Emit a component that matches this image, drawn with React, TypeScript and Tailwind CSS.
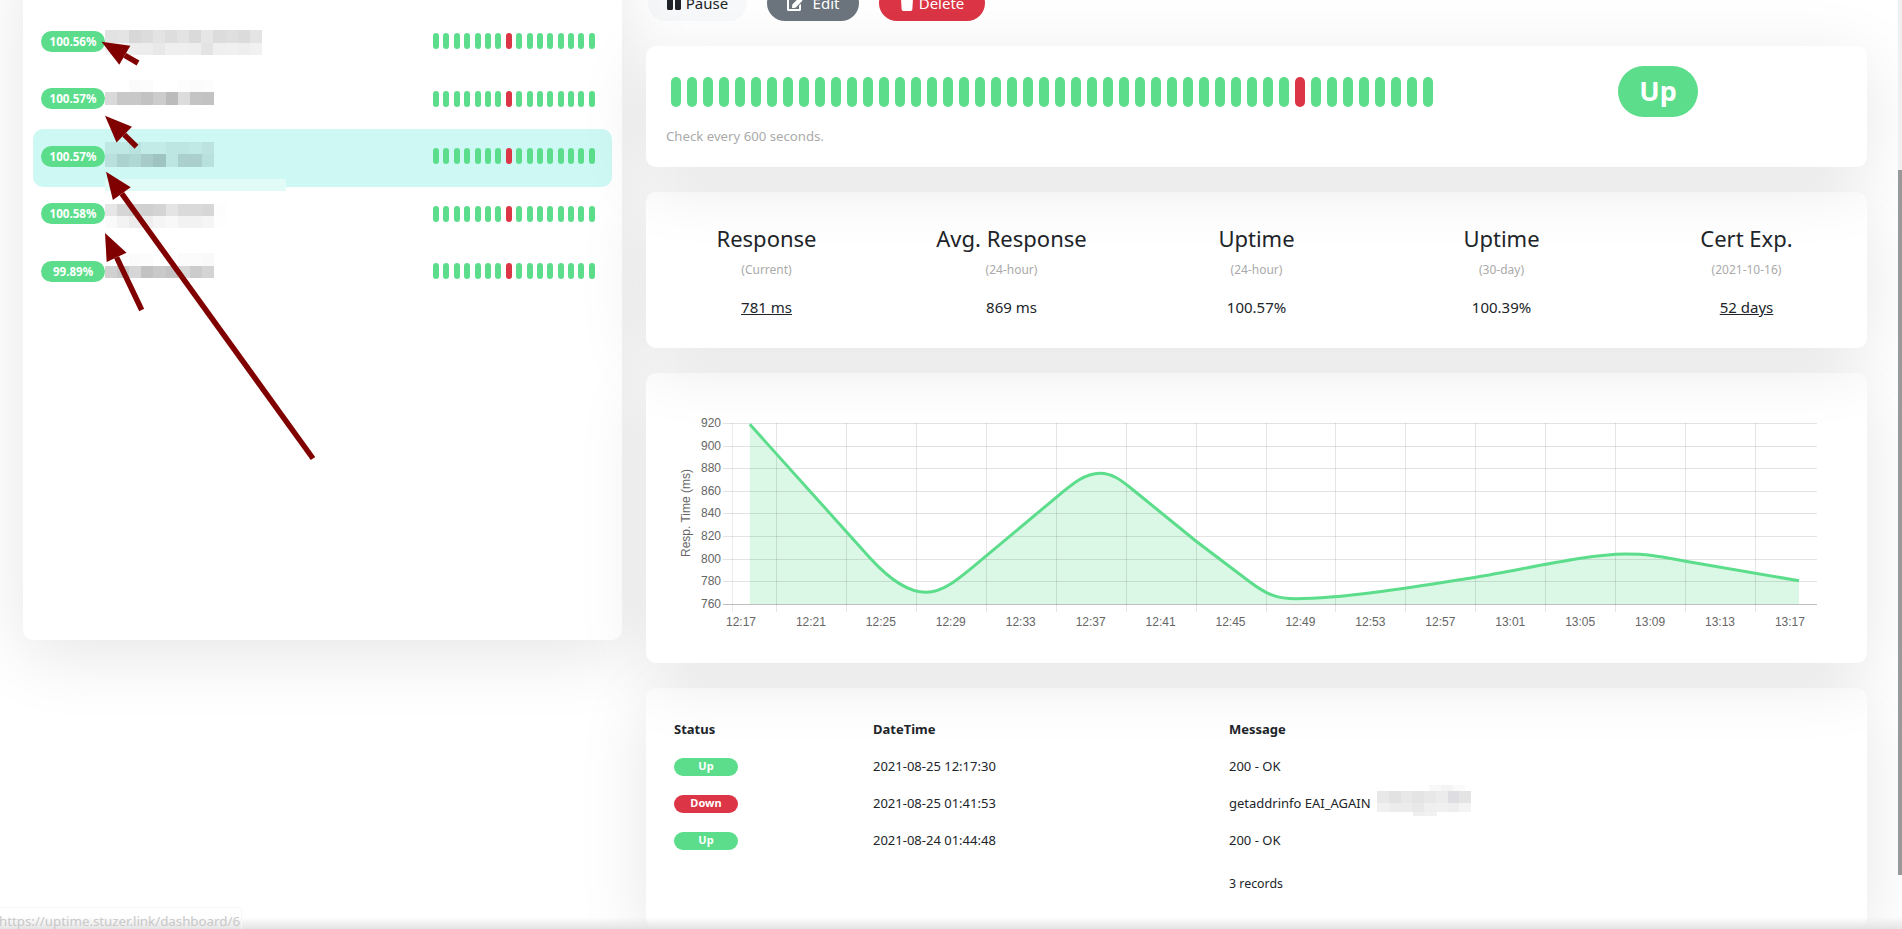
import { FaPause, FaEdit, FaTrash } from "react-icons/fa";

const monitors = [
  { uptime: "100.56%", active: false },
  { uptime: "100.57%", active: false },
  { uptime: "100.57%", active: true },
  { uptime: "100.58%", active: false },
  { uptime: "99.89%", active: false },
];

const stats = [
  { title: "Response", sub: "(Current)", value: "781 ms", link: true },
  { title: "Avg. Response", sub: "(24-hour)", value: "869 ms", link: false },
  { title: "Uptime", sub: "(24-hour)", value: "100.57%", link: false },
  { title: "Uptime", sub: "(30-day)", value: "100.39%", link: false },
  { title: "Cert Exp.", sub: "(2021-10-16)", value: "52 days", link: true },
];

const events = [
  { status: "Up", time: "2021-08-25 12:17:30", message: "200 - OK" },
  { status: "Down", time: "2021-08-25 01:41:53", message: "getaddrinfo EAI_AGAIN" },
  { status: "Up", time: "2021-08-24 01:44:48", message: "200 - OK" },
];

// censored blocks: [x, y, cell width, cell height, colours]
const mosaics: [number, number, number, number, string[]][] = [
  [105, 30, 12.05, 13, ["#e2e2e2", "#e4e4e4", "#d8d8d8", "#dcdcdc", "#e3e3e3", "#dddddd", "#e3e3e3", "#dadada", "#e6e6e6", "#dcdcdc", "#dfdfdf", "#dbdbdb", "#e4e4e4"]],
  [105, 43, 12.05, 12, ["#f3f3f3", "#f3f3f3", "#ededed", "#ededed", "#e8e8e8", "#efefef", "#efefef", "#eeeeee", "#e3e3e3", "#efefef", "#f0f0f0", "#eeeeee", "#f1f1f1"]],
  [105, 80, 12.1, 12, ["#ffffff", "#ffffff", "#fbfbfb", "#fcfcfc", "#ffffff", "#ffffff", "#fdfdfd", "#fbfbfb", "#fcfcfc"]],
  [105, 92, 12.1, 13, ["#d9d9d9", "#c8c8c8", "#c8c8c8", "#c2c2c2", "#cccccc", "#bbbbbb", "#dcdcdc", "#c4c4c4", "#c2c2c2"]],
  [105, 142, 12.1, 12, ["#bfe8e4", "#bfe8e4", "#b8e2de", "#c2eae6", "#c2eae6", "#bde5e1", "#bde5e1", "#c0e8e4", "#bce3df"]],
  [105, 154, 12.1, 13, ["#b9e0dc", "#abd2cf", "#afd7d3", "#a6cbc9", "#9ec3c1", "#bde5e1", "#aacfcd", "#aacfcd", "#b8e0dc"]],
  [105, 179, 181, 12, ["#e1fbf7"]],
  [105, 204, 12.1, 12, ["#e6e6e6", "#d6d6d6", "#d2d2d2", "#d0d0d0", "#d4d4d4", "#e4e4e4", "#dadada", "#dadada", "#d7d7d7", "#fdfdfd"]],
  [105, 216, 12.1, 12, ["#fafafa", "#f3f3f3", "#ececec", "#eeeeee", "#f5f5f5", "#f8f8f8", "#f2f2f2", "#f2f2f2", "#f5f5f5", "#fefefe"]],
  [105, 253, 12.1, 13, ["#ffffff", "#fefefe", "#fbfbfb", "#fcfcfc", "#ffffff", "#ffffff", "#fbfbfb", "#fbfbfb", "#f9f9f9"]],
  [105, 266, 12.1, 12, ["#d0d0d0", "#c8c8c8", "#d6d6d6", "#c2c2c2", "#c9c9c9", "#c4c4c4", "#d8d8d8", "#cccccc", "#d4d4d4"]],
  [1429, 785, 12, 6, ["#f8f8f8", "#f4f4f4", "#fafafa"]],
  [1377, 791, 11.75, 12, ["#e8e8e8", "#e2e2e2", "#e8e8e8", "#e4e4e4", "#e8e8e8", "#ececec", "#dddde2", "#e4e4e4"]],
  [1377, 803, 11.75, 9, ["#f0f0f0", "#ececec", "#ececec", "#e8e8e8", "#efefef", "#f0f0f0", "#eeeeee", "#f4f4f4"]],
  [1413, 812, 12, 4, ["#efefef", "#f2f2f2"]],
];

const arrows = [
  { tip: [101.5, 41.7], tail: [138, 63] },
  { tip: [105, 115.7], tail: [136.5, 146.7] },
  { tip: [106, 171.7], tail: [313, 458.5] },
  { tip: [105, 233], tail: [141.7, 310] },
];

const linePath =
  "M749.8 424.3 L870 558 C893 583 910 592.3 926 592.3 C945 592.3 962 576 986.5 555.7 L1056.3 497.3 " +
  "C1073 483.3 1085 473.3 1100 473.3 C1112 473.3 1121 480 1132 489 L1195.5 540.7 L1250 582 " +
  "C1268 595.5 1278 598.7 1296 598.7 C1345 598.5 1420 586 1475.6 577.3 C1530 568 1590 554 1625 554 " +
  "C1650 554 1660 556.5 1685.5 561.3 L1799 580.7";

function Bars({ count, red, className }: { count: number; red: number; className: string }) {
  return (
    <>
      {Array.from({ length: count }).map((_, i) => (
        <div
          key={i}
          className={`${className} rounded-full ${i === red ? "bg-[#dc3545]" : "bg-[#5cdd8b]"}`}
        />
      ))}
    </>
  );
}

function Chart() {
  const yLabels = [920, 900, 880, 860, 840, 820, 800, 780, 760];
  const xLabels = ["12:17", "12:21", "12:25", "12:29", "12:33", "12:37", "12:41", "12:45", "12:49", "12:53", "12:57", "13:01", "13:05", "13:09", "13:13", "13:17"];
  return (
    <svg viewBox="646 373 1221 290" className="block h-[290px] w-[1221px]">
      <path d={`${linePath} L1799 604 L749.8 604 Z`} fill="#5cdd8b" fillOpacity="0.22" />
      {yLabels.map((label, i) => {
        const y = Math.round(423 + i * 22.6) + 0.5;
        return (
          <g key={label}>
            <line x1={723} x2={1817} y1={y} y2={y} stroke="#000" strokeOpacity={i === 8 ? 0.25 : 0.11} />
            <text x={721} y={y + 3} textAnchor="end" fontSize="12" fontFamily="Liberation Sans" fill="#666">
              {label}
            </text>
          </g>
        );
      })}
      <line x1={732.5} x2={732.5} y1={423} y2={612} stroke="#000" strokeOpacity="0.08" />
      {xLabels.map((label, i) => {
        const x = Math.round(776 + i * 69.93) + 0.5;
        return i < 15 ? (
          <line key={label} x1={x} x2={x} y1={423} y2={612} stroke="#000" strokeOpacity="0.1" />
        ) : null;
      })}
      {xLabels.map((label, i) => (
        <text key={label} x={741 + i * 69.93} y={626} textAnchor="middle" fontSize="12" fontFamily="Liberation Sans" fill="#666">
          {label}
        </text>
      ))}
      <text
        x={0}
        y={0}
        transform="translate(689.5 513) rotate(-90)"
        textAnchor="middle"
        fontSize="12"
        fontFamily="Liberation Sans"
        fill="#666"
      >
        Resp. Time (ms)
      </text>
      <path d={linePath} fill="none" stroke="#5cdd8b" strokeWidth="3" />
    </svg>
  );
}

// mosaics and arrows were drawn on top of the screenshot
function Annotations() {
  return (
    <svg viewBox="0 0 1902 929" className="pointer-events-none absolute top-0 left-0 z-40 h-[929px] w-[1902px]">
      {mosaics.map(([x, y, w, h, cells], i) => (
        <g key={i} shapeRendering="crispEdges">
          {cells.map((fill, j) => (
            <rect key={j} x={x + j * w} y={y} width={w} height={h} fill={fill} />
          ))}
        </g>
      ))}
      {arrows.map(({ tip, tail }, i) => {
        const len = Math.hypot(tail[0] - tip[0], tail[1] - tip[1]);
        const ux = (tail[0] - tip[0]) / len;
        const uy = (tail[1] - tip[1]) / len;
        const bx = tip[0] + ux * 27;
        const by = tip[1] + uy * 27;
        const head = [
          tip,
          [bx - uy * 11, by + ux * 11],
          [bx + uy * 11, by - ux * 11],
        ];
        return (
          <g key={i} fill="#800000" stroke="#800000">
            <line x1={bx} y1={by} x2={tail[0]} y2={tail[1]} strokeWidth="5.5" />
            <polygon points={head.map((p) => p.join(",")).join(" ")} stroke="none" />
          </g>
        );
      })}
    </svg>
  );
}

export default function App() {
  return (
    <div className="relative h-[929px] w-[1902px] overflow-hidden bg-white font-['Noto_Sans',sans-serif] text-[#212529]">
      <div className="flex items-start pl-[23px]">
        <div className="relative z-0 -mt-[50px] h-[690px] w-[599px] rounded-[10px] bg-white px-[10px] pt-[64px] shadow-[0_15px_70px_rgba(0,0,0,0.1)]">
          {monitors.map((m, i) => (
            <div
              key={i}
              className={`flex h-[57.5px] items-center rounded-[10px] pr-[17px] pb-[3px] pl-[8px] ${m.active ? "bg-[#cdf8f4]" : ""}`}
            >
              <span className="flex h-[21px] w-[64px] items-center justify-center rounded-full bg-[#5cdd8b] text-[11.6px] font-bold text-white">
                {m.uptime}
              </span>
              <div className="ml-auto flex h-[16px] w-[162px] gap-[4.4px]">
                <Bars count={16} red={7} className="h-[16px] w-[6px]" />
              </div>
            </div>
          ))}
        </div>

        <div className="-mt-[15px] ml-[24px] flex w-[1221px] flex-col">
          <div className="flex h-[36px] items-center text-[15px]">
            <button className="ml-[2px] flex h-[36px] w-[99px] items-center justify-center gap-[5px] rounded-full bg-[#f8f9fa] text-[#212529]">
              <FaPause className="h-[16px] w-[14px]" />
              Pause
            </button>
            <button className="ml-[20px] flex h-[36px] w-[92px] items-center justify-center gap-[8px] rounded-full bg-[#6c757d] text-white">
              <FaEdit className="h-[18px] w-[18px]" />
              Edit
            </button>
            <button className="ml-[20px] flex h-[36px] w-[106px] items-center justify-center gap-[5px] rounded-full bg-[#dc3545] text-white">
              <FaTrash className="h-[16px] w-[14px]" />
              Delete
            </button>
          </div>

          <div className="relative z-30 mt-[25px] h-[121px] rounded-[10px] bg-white pt-[31px] pl-[25px] shadow-[0_15px_70px_rgba(0,0,0,0.1)]">
            <div className="flex items-start">
              <div className="flex gap-[6px]">
                <Bars count={48} red={39} className="h-[30px] w-[10px]" />
              </div>
              <span className="-mt-[11px] ml-[185px] flex h-[51px] w-[80px] items-center justify-center rounded-[26px] bg-[#5cdd8b] text-[27px] font-bold text-white">
                Up
              </span>
            </div>
            <p className="mt-[10px] -ml-[5px] text-[13.2px] text-[#aaa]">Check every 600 seconds.</p>
          </div>

          <div className="relative z-20 mt-[25px] h-[156px] rounded-[10px] bg-white pt-[30px] shadow-[0_15px_70px_rgba(0,0,0,0.1)]">
            <div className="-mx-[2px] grid grid-cols-5">
              {stats.map((s, i) => (
                <div key={i} className="flex flex-col items-center">
                  <h4 className="h-[32px] text-[22px] leading-[32px] font-normal">{s.title}</h4>
                  <p className="mt-[6px] h-[20px] text-[12px] leading-[20px] text-[#aaa]">{s.sub}</p>
                  <span className={`mt-[15px] h-[24px] text-[15px] leading-[24px] ${s.link ? "underline" : ""}`}>
                    {s.value}
                  </span>
                </div>
              ))}
            </div>
          </div>

          <div className="relative z-10 mt-[25px] h-[290px] rounded-[10px] bg-white shadow-[0_15px_70px_rgba(0,0,0,0.1)]">
            <Chart />
          </div>

          <div className="relative z-0 mt-[25px] h-[240px] rounded-[10px] bg-white pt-[23px] pl-[28px] text-[13px] shadow-[0_15px_70px_rgba(0,0,0,0.1)]">
            <div className="grid h-[37px] grid-cols-[199px_356px_1fr] items-center font-bold">
              <span>Status</span>
              <span>DateTime</span>
              <span>Message</span>
            </div>
            {events.map((e, i) => (
              <div key={i} className="grid h-[37px] grid-cols-[199px_356px_1fr] items-center">
                <span
                  className={`flex h-[18px] w-[64px] items-center justify-center rounded-full text-[11px] font-bold text-white ${e.status === "Up" ? "bg-[#5cdd8b]" : "bg-[#dc3545]"}`}
                >
                  {e.status}
                </span>
                <span>{e.time}</span>
                <span>{e.message}</span>
              </div>
            ))}
            <div className="mt-[6.5px] grid h-[37px] grid-cols-[199px_356px_1fr] items-center">
              <span />
              <span />
              <span className="text-[12.4px]">3 records</span>
            </div>
          </div>
        </div>
      </div>

      <Annotations />

      <div className="absolute top-0 right-0 z-50 h-[170px] w-[4px] bg-[#f0f0f0]" />
      <div className="absolute top-[170px] right-0 z-50 h-[705px] w-[4px] bg-[#999]" />
      <div className="absolute right-0 bottom-0 left-0 z-50 h-[12px] bg-gradient-to-b from-transparent to-[#e4e4e4]" />
      <div className="absolute bottom-0 left-0 z-50 flex h-[22px] w-[242px] items-start overflow-hidden rounded-tr border-t border-r border-[#f7f7f7] pt-[3px] text-[13.3px] leading-[20px] whitespace-nowrap text-[#c8c8c8]">
        <span className="-ml-[1px]">https://uptime.stuzer.link/dashboard/6</span>
      </div>
    </div>
  );
}
